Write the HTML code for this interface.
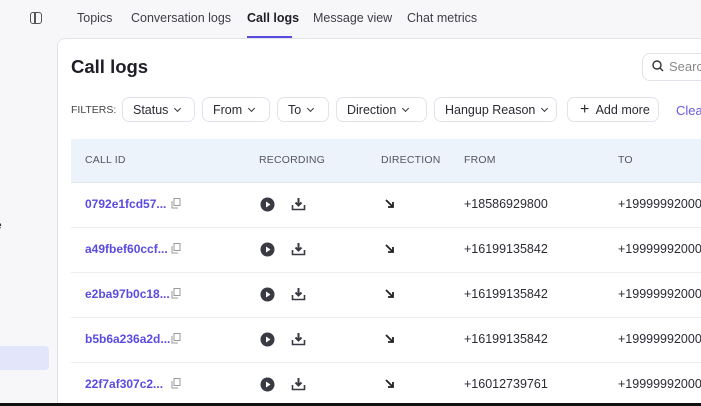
<!DOCTYPE html><html style="height:406px;overflow:hidden"><head><style>
body{margin:0;width:701px;height:406px;overflow:hidden;background:#f7f7f9;font-family:"Liberation Sans",sans-serif;position:relative;color:#2a2a33}
.a{position:absolute;white-space:nowrap}
.tab{top:11px;font-size:12.5px;color:#3d3d48}
.card{left:57px;top:38px;width:700px;height:368px;background:#fff;border:1px solid #e2e3ea;border-bottom:none;border-radius:8px 8px 0 0;box-sizing:border-box}
.pill{top:97px;height:25px;border:1px solid #e2e3ea;border-radius:7px;background:#fff;font-size:12.5px;line-height:24px;padding:0 10px;box-sizing:border-box;color:#2a2a33}
.hd{top:154px;font-size:10.5px;color:#55555f;letter-spacing:.2px}
.id{font-size:12px;color:#5a4be0;font-weight:bold}
.ph{font-size:12.5px;color:#2a2a33}
.line{left:71px;width:640px;height:1px;background:#ececf0}
.chev{display:inline-block;width:4px;height:4px;border-right:1.5px solid #333;border-bottom:1.5px solid #333;transform:rotate(45deg);margin-left:7px;position:relative;top:-3px}
</style></head><body>
<div class="a" style="left:30px;top:12px;width:10px;height:10px;border:1.5px solid #555;border-radius:3px"></div>
<div class="a" style="left:34px;top:13px;width:1.5px;height:10px;background:#555"></div>
<div class="a tab" style="left:77px">Topics</div>
<div class="a tab" style="left:131px">Conversation logs</div>
<div class="a tab" style="left:247px;color:#1e1e26;font-weight:bold">Call logs</div>
<div class="a" style="left:247px;top:36px;width:45px;height:2px;background:#5a4be0"></div>
<div class="a tab" style="left:313px">Message view</div>
<div class="a tab" style="left:407px">Chat metrics</div>
<div class="a" style="left:-5px;top:218px;font-size:12px">e</div>
<div class="a" style="left:-5px;top:346px;width:54px;height:24px;background:#e3e5fb;border-radius:4px"></div>
<div class="a card"></div>
<div class="a" style="left:71px;top:56px;font-size:18.5px;font-weight:bold;color:#1e1e26">Call logs</div>
<div class="a" style="left:642px;top:53px;width:80px;height:26px;border:1px solid #e2e3ea;border-radius:8px;background:#fff"></div>
<svg class="a" style="left:652px;top:60px" width="12" height="12"><circle cx="5" cy="5" r="4" fill="none" stroke="#333" stroke-width="1.4"/><path d="M8 8l3 3" stroke="#333" stroke-width="1.4"/></svg>
<div class="a" style="left:669px;top:59px;font-size:13px;color:#888">Search</div>
<div class="a" style="left:71px;top:104px;font-size:10.5px;color:#444">FILTERS:</div>
<div class="a pill" style="left:122px;width:73px">Status<span class="chev"></span></div>
<div class="a pill" style="left:202px;width:68px">From<span class="chev"></span></div>
<div class="a pill" style="left:277px;width:52px">To<span class="chev"></span></div>
<div class="a pill" style="left:336px;width:91px">Direction<span class="chev"></span></div>
<div class="a pill" style="left:434px;width:123px">Hangup Reason<span class="chev"></span></div>
<div class="a pill" style="left:567px;width:92px;padding-left:12px"><span style="font-size:16px">+</span>&nbsp; Add more</div>
<div class="a" style="left:676px;top:103px;font-size:13px;color:#6a5ae6">Clear</div>
<div class="a" style="left:71px;top:139px;width:640px;height:43px;background:#edf3fa;border-bottom:1px solid #e2e6ee"></div>
<div class="a hd" style="left:85px">CALL ID</div>
<div class="a hd" style="left:259px">RECORDING</div>
<div class="a hd" style="left:381px">DIRECTION</div>
<div class="a hd" style="left:464px">FROM</div>
<div class="a hd" style="left:618px">TO</div>
<div class="a line" style="top:227px"></div><div class="a line" style="top:272px"></div><div class="a line" style="top:317px"></div><div class="a line" style="top:362px"></div>
<div id="rows"></div>
<script>
var d=[["0792e1fcd57...","+18586929800"],["a49fbef60ccf...","+16199135842"],["e2ba97b0c18...","+16199135842"],["b5b6a236a2d...","+16199135842"],["22f7af307c2...","+16012739761"]];
var h="";d.forEach(function(r,i){var y=197+i*45;
h+='<div class="a id" style="left:85px;top:'+y+'px">'+r[0]+'</div>';
h+='<svg class="a" style="left:171px;top:'+(y+1)+'px" width="10" height="11"><rect x="3" y="0.5" width="6" height="7" fill="none" stroke="#999"/><path d="M1 3v7h6" fill="none" stroke="#999"/></svg>';
h+='<svg class="a" style="left:260px;top:'+(y)+'px" width="15" height="15"><circle cx="7.5" cy="7.5" r="7" fill="#3a3a44"/><path d="M6 4.5l4.5 3-4.5 3z" fill="#fff"/></svg>';
h+='<svg class="a" style="left:291px;top:'+(y)+'px" width="15" height="14"><path d="M7.5 1v7M4.5 5.5l3 3 3-3" fill="none" stroke="#3a3a44" stroke-width="2"/><path d="M1.5 8v4.5h12V8" fill="none" stroke="#3a3a44" stroke-width="1.6"/></svg>';
h+='<svg class="a" style="left:385px;top:'+(y+2)+'px" width="10" height="10"><path d="M1 1l7 7M8 3v5H3" fill="none" stroke="#222" stroke-width="1.8"/></svg>';
h+='<div class="a ph" style="left:464px;top:'+y+'px">'+r[1]+'</div>';
h+='<div class="a ph" style="left:618px;top:'+y+'px">+19999992000</div>';});
document.getElementById("rows").innerHTML=h;
</script>
<div class="a" style="left:0;top:403px;width:701px;height:3px;background:#111"></div>
</body></html>
